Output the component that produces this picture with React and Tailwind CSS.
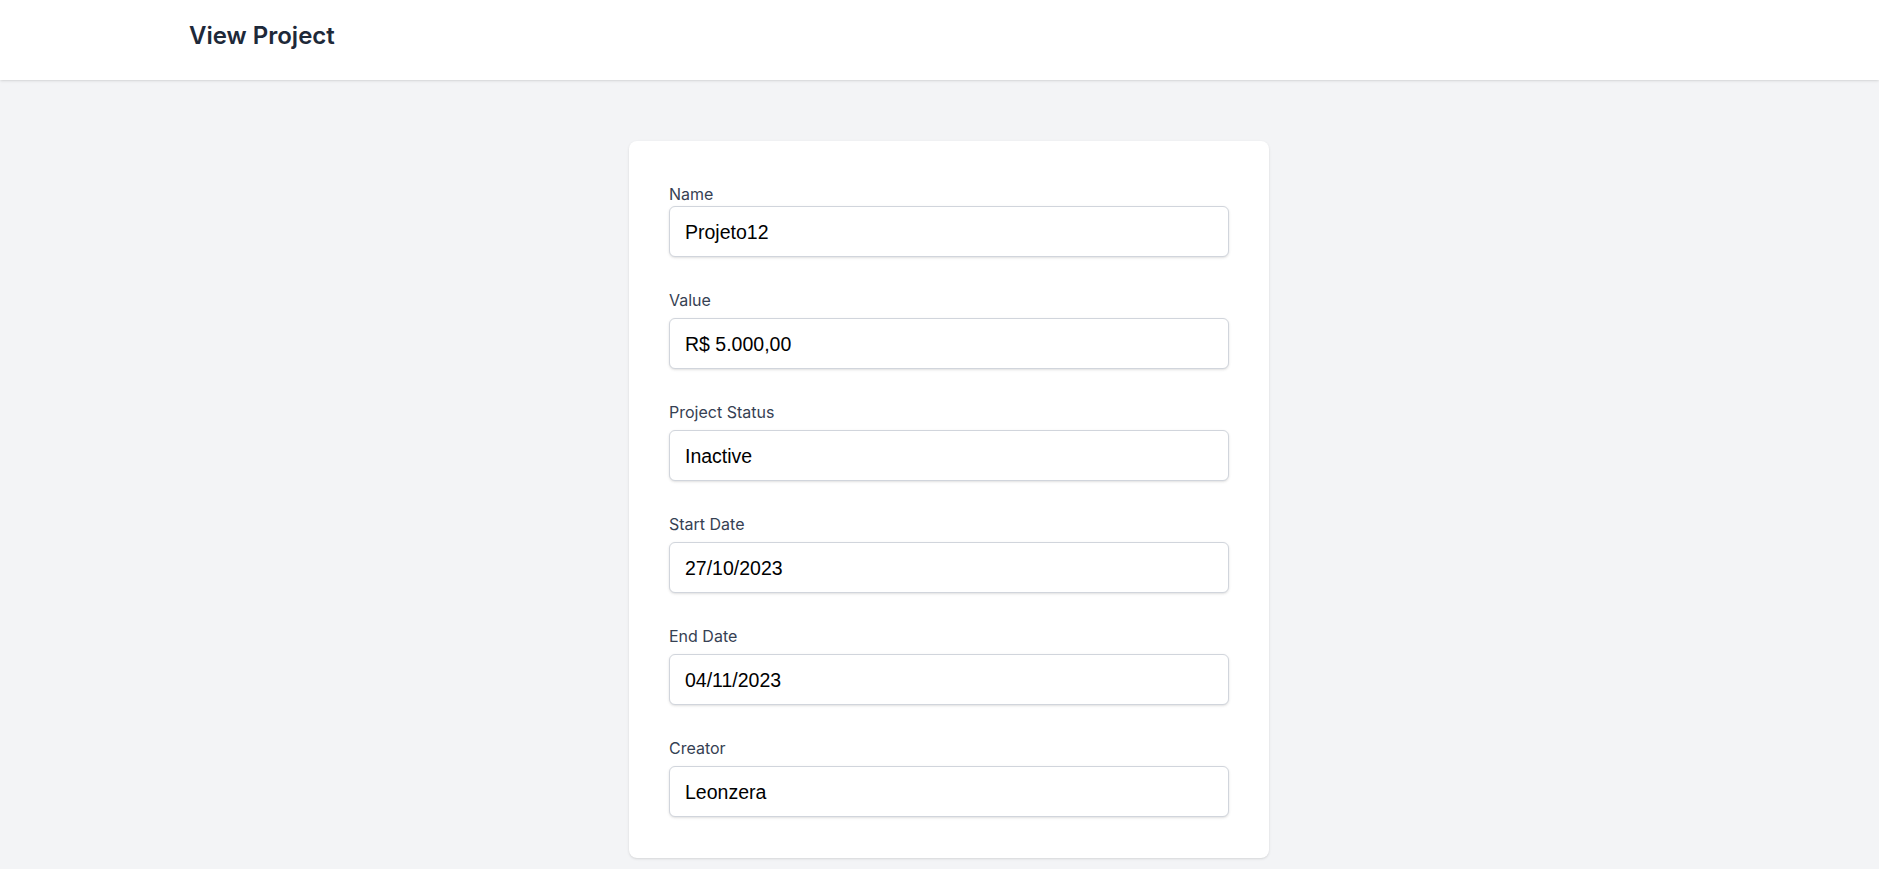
const fields = [
  { label: "Name", value: "Projeto12" },
  { label: "Value", value: "R$ 5.000,00" },
  { label: "Project Status", value: "Inactive" },
  { label: "Start Date", value: "27/10/2023" },
  { label: "End Date", value: "04/11/2023" },
  { label: "Creator", value: "Leonzera" },
];

export default function App() {
  return (
    <div className="min-h-screen bg-[#f3f4f6] font-['Inter',sans-serif]">
      {/* Header */}
      <header className="h-20 bg-white shadow">
        <div className="px-[189px] pt-[21px]">
          <h2 className="text-[24px] font-semibold leading-[30px] text-gray-800">View Project</h2>
        </div>
      </header>

      {/* Content */}
      <main className="flex justify-center pl-[19px] pt-[61px]">
        <div className="w-[640px] rounded-lg bg-white px-10 pt-[43px] pb-[41px] shadow-sm">
          {fields.map((f, i) => (
            <div key={f.label} className={i === 0 ? "" : "mt-[33px]"}>
              <label className={"block text-[16px] font-normal leading-5 text-gray-700 " + (i === 0 ? "mb-[2px]" : "mb-2")}>
                {f.label}
              </label>
              <div className="flex h-[51px] items-center rounded-md border border-gray-300 bg-white px-[15px] pt-[2px] font-['Liberation_Sans',Arial,sans-serif] text-[19.5px] text-black shadow-sm">
                {f.value}
              </div>
            </div>
          ))}
        </div>
      </main>
    </div>
  );
}
